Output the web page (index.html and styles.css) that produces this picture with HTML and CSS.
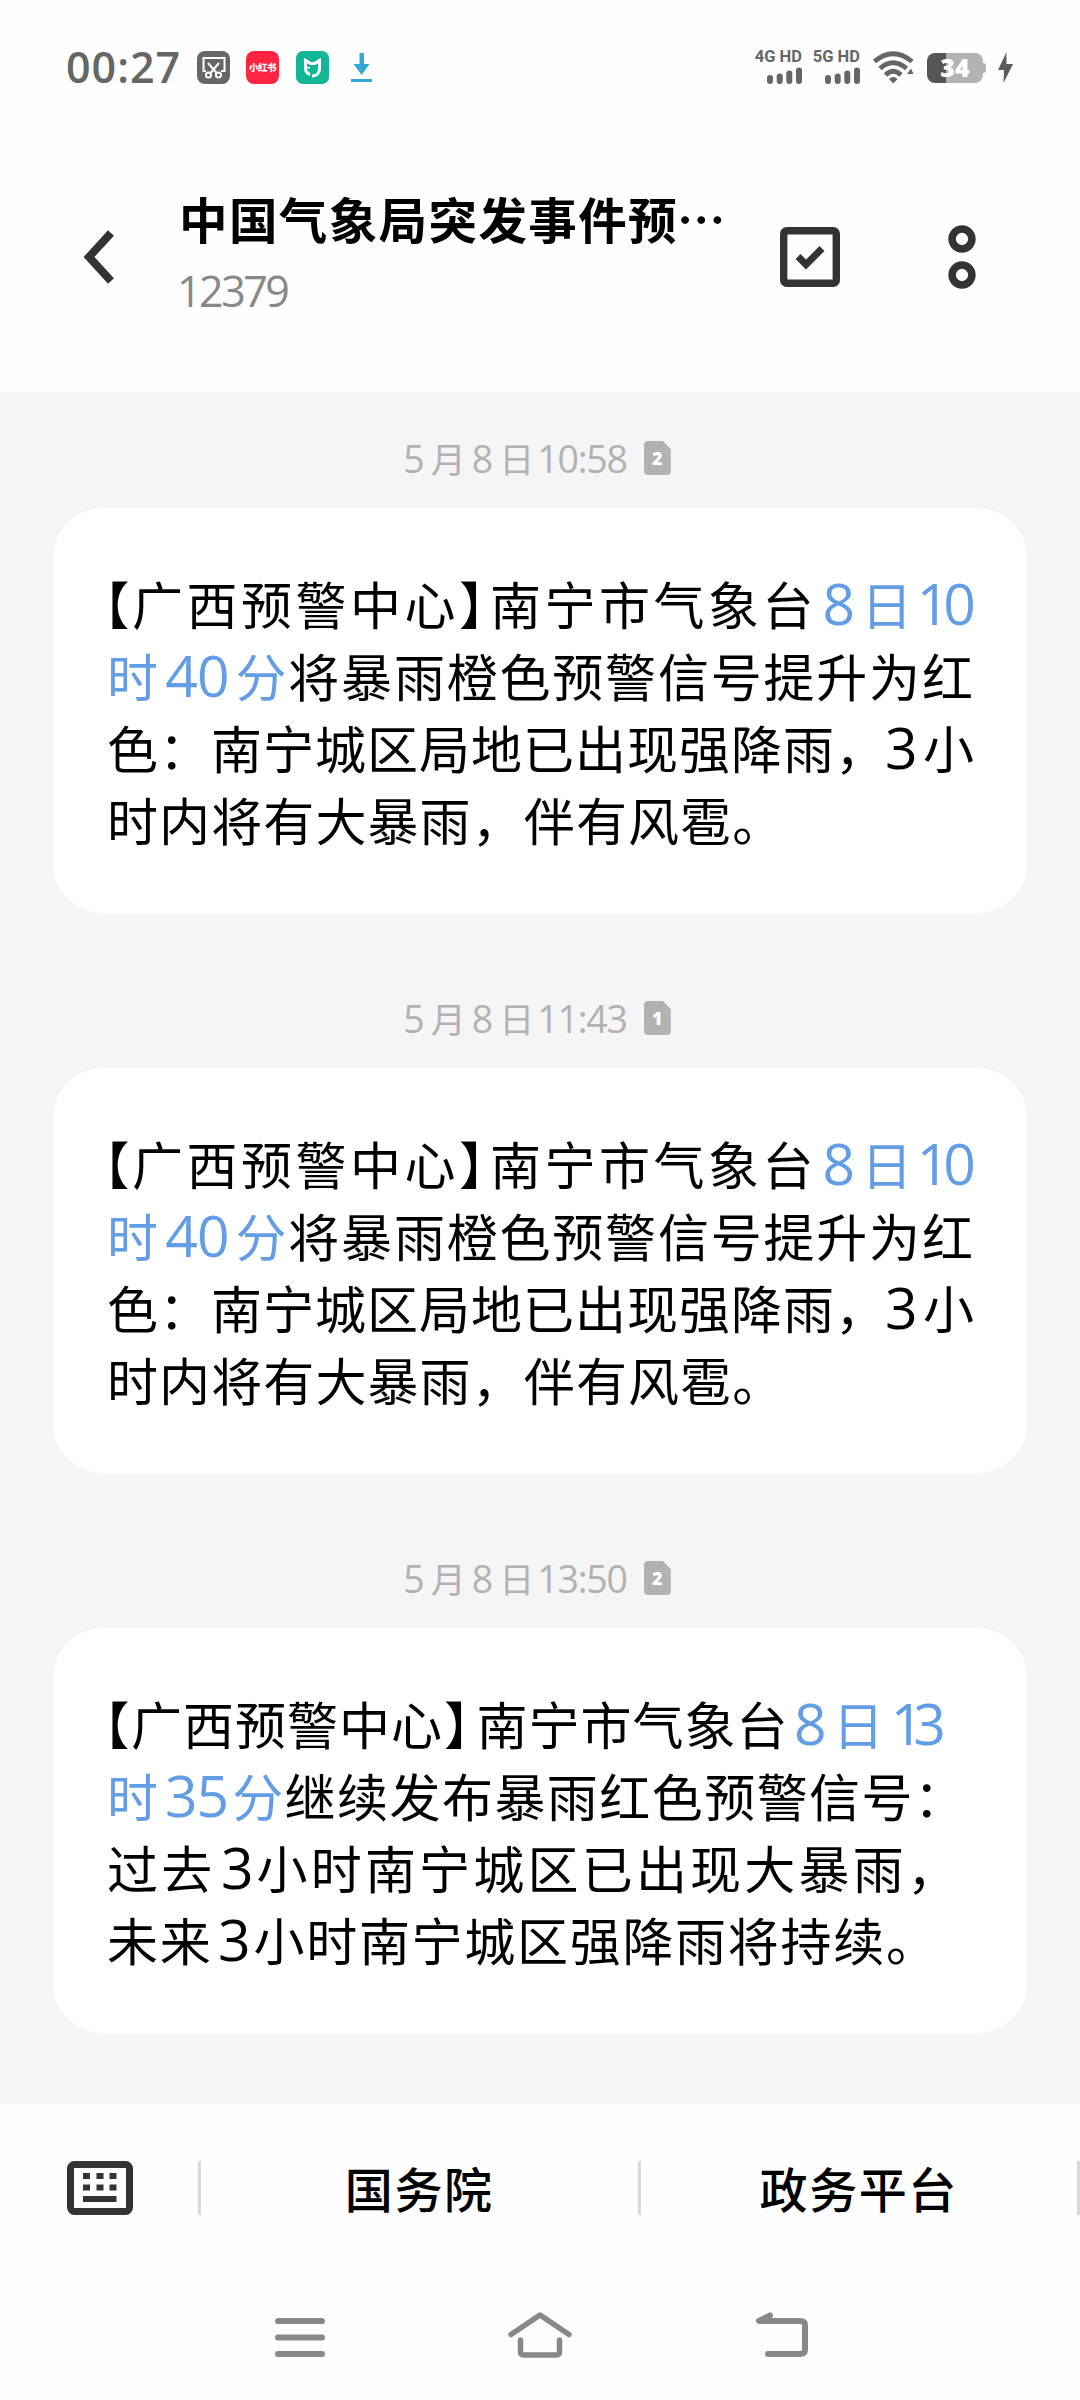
FILE: index.html
```html
<!DOCTYPE html>
<html lang="zh-CN">
<head>
<meta charset="utf-8">
<title>12379</title>
<link rel="stylesheet" href="styles.css">
</head>
<body>
<div class="status">
  <span class="clock">00:27</span>
  <div class="apps">
    <svg width="33" height="33" viewBox="0 0 33 33"><rect width="33" height="33" rx="8" fill="#666"/><g fill="none" stroke="#fff" stroke-width="2"><path d="M9 20H6.500V7H27.500V20H24"/><path d="M11 12l9 10.500M22 12l-9 10.500"/><circle cx="11.500" cy="24" r="2.600"/><circle cx="21.500" cy="24" r="2.600"/></g></svg>
    <span class="app-red">小红书</span>
    <svg width="33" height="33" viewBox="0 0 33 33"><rect width="33" height="33" rx="7" fill="#13b795"/><path d="M14 23.500c-3-1-4.500-3-4.500-6V9.500l5 3h4l5-3V18c0 4-3 7-7.500 7M12.500 16v1.500" fill="none" stroke="#fff" stroke-width="3"/></svg>
    <svg width="33" height="33" viewBox="0 0 33 33"><path d="M14.500 2h4.500v11h5.500L16.700 24 8.500 13h6zM6 28h21v3H6z" fill="#32a9d9"/></svg>
  </div>
  <div class="signals">
    <div class="sim"><span>4G HD</span><svg width="35" height="17" viewBox="0 0 35 17"><path d="M3 11v3M12.700 9.500V14M22.300 6.500V14M32 3.500V14" stroke="#666" stroke-width="6" stroke-linecap="round"/></svg></div>
    <div class="sim second"><span>5G HD</span><svg width="35" height="17" viewBox="0 0 35 17"><path d="M3 11v3M12.700 9.500V14M22.300 6.500V14M32 3.500V14" stroke="#666" stroke-width="6" stroke-linecap="round"/></svg></div>
    <svg class="wifi" width="42" height="34" viewBox="0 0 42 34"><g fill="none" stroke="#666" stroke-width="4.800"><path d="M1.500 10.500Q20 -5 39 10.500"/><path d="M7 17.500Q20 6 33.500 17.500"/><path d="M12.500 24Q20 16.500 28 24"/></g><path d="M16 28q4.300-4 8.600 0l-4.300 4.500zM34 23l4-5.500 2.500 5.500z" fill="#666"/></svg>
    <div class="battery">34</div>
    <svg class="bolt" width="17" height="31" viewBox="0 0 17 31"><path d="M9.500 0 1 18h6L6.500 31 16 12H9.500z" fill="#5c5c5c"/></svg>
  </div>
</div>

<header class="header">
  <svg class="back" width="34" height="54" viewBox="0 0 34 54"><path d="M29 3 7 27l22 24" fill="none" stroke="#333" stroke-width="8"/></svg>
  <div class="titles">
    <h1>中国气象局突发事件预<span class="dots">…</span></h1>
    <div class="number">12379</div>
  </div>
  <svg class="select" width="60" height="60" viewBox="0 0 60 60"><rect x="3.700" y="3.700" width="52.600" height="52.600" rx="3" fill="none" stroke="#333" stroke-width="7.400"/><path d="m18 29.500 8 8 16-16" fill="none" stroke="#333" stroke-width="7"/></svg>
  <svg class="more" width="28" height="64" viewBox="0 0 28 64"><g fill="none" stroke="#333" stroke-width="7.500"><circle cx="14" cy="14" r="9.900"/><circle cx="14" cy="50" r="9.900"/></g></svg>
</header>

<main class="thread">
  <div class="stamp"><span><b>5</b>月<b class="mid">8</b>日<b class="hour">10:58</b></span><span class="card-tag">2</span></div>
  <article class="bubble">
    <p class="s35"><span class="br open">【</span>广西预警中心<span class="br close">】</span>南宁市气象台<a><b>8</b>日<b class="one">10</b></a></p>
    <p class="s18"><a>时<b>40</b>分</a>将暴雨橙色预警信号提升为红</p>
    <p class="s10">色：南宁城区局地已出现强降雨，<b class="after-comma">3</b>小</p>
    <p class="s11">时内将有大暴雨，伴有风雹。</p>
  </article>

  <div class="stamp"><span><b>5</b>月<b class="mid">8</b>日<b class="hour">11:43</b></span><span class="card-tag">1</span></div>
  <article class="bubble">
    <p class="s35"><span class="br open">【</span>广西预警中心<span class="br close">】</span>南宁市气象台<a><b>8</b>日<b class="one">10</b></a></p>
    <p class="s18"><a>时<b>40</b>分</a>将暴雨橙色预警信号提升为红</p>
    <p class="s10">色：南宁城区局地已出现强降雨，<b class="after-comma">3</b>小</p>
    <p class="s11">时内将有大暴雨，伴有风雹。</p>
  </article>

  <div class="stamp"><span><b>5</b>月<b class="mid">8</b>日<b class="hour">13:50</b></span><span class="card-tag">2</span></div>
  <article class="bubble">
    <p class="s10 loose"><span class="br open">【</span>广西预警中心<span class="br close">】</span>南宁市气象台<a><b>8</b>日<b class="one">13</b></a></p>
    <p class="s15"><a>时<b class="snug">35</b>分</a>继续发布暴雨红色预警信号：</p>
    <p class="s32">过去<b class="snug">3</b>小时南宁城区已出现大暴雨，</p>
    <p class="s17">未来<b class="snug">3</b>小时南宁城区强降雨将持续。</p>
  </article>
</main>

<footer class="menu">
  <div class="keys"><svg width="66" height="54" viewBox="0 0 66 54"><rect x="3.500" y="3.500" width="59" height="47" rx="4" fill="none" stroke="#333" stroke-width="7"/><path d="M16 12h7v6h-7zM29.500 12h7v6h-7zM42.500 12h7v6h-7zM16 23.500h7v6h-7zM29.500 23.500h7v6h-7zM42.500 23.500h7v6h-7zM16 35h33.500v6H16z" fill="#333"/></svg></div>
  <div class="item">国务院</div>
  <div class="item">政务平台</div>
</footer>

<nav class="nav">
  <svg width="50" height="50" viewBox="0 0 50 50"><path d="M3 9h44M3 25.500h44M3 42h44" stroke="#888" stroke-width="6" stroke-linecap="round"/></svg>
  <svg width="66" height="50" viewBox="0 0 66 50"><g fill="none" stroke="#888" stroke-width="5.500" stroke-linecap="round" stroke-linejoin="round"><path d="M4 22.500 33 3l29 19.500"/><path d="M13.500 28v12q0 3 4 3h31q4 0 4-3V28"/></g></svg>
  <svg width="56" height="50" viewBox="0 0 56 50"><path d="M15 3.500 4 9h41q5 0 5 4v25q0 4-5 4H13" fill="none" stroke="#888" stroke-width="6" stroke-linecap="round" stroke-linejoin="round"/></svg>
</nav>
</body>
</html>
```
FILE: styles.css
```css
* { box-sizing: border-box; }
body {
  margin: 0;
  width: 1080px;
  height: 2400px;
  overflow: hidden;
  background: #fefefe;
  color: #000;
  font-family: "Noto Sans CJK SC", sans-serif;
  display: flex;
  flex-direction: column;
}
svg { display: block; flex: none; }

/* status bar */
.status {
  height: 135px;
  padding: 0 66px;
  display: flex;
  align-items: center;
  color: #666;
  font-family: "Open Sans", sans-serif;
}
.clock { width: 132px; font-size: 43px; font-weight: 600; line-height: 60px; letter-spacing: 1px; margin-top: -2px; }
.apps { display: flex; gap: 16.500px; }
.app-red {
  width: 33px;
  height: 33px;
  border-radius: 8px;
  background: #fe2442;
  color: #fff;
  font: 900 9.500px/32px "Noto Sans CJK SC", sans-serif;
  letter-spacing: -0.500px;
  text-align: center;
}
.signals { display: flex; align-items: center; margin-left: 376px; }
.sim { width: 48px; height: 33px; display: flex; flex-direction: column; align-items: flex-end; }
.sim span { font: 700 16.500px/12px Roboto, sans-serif; height: 16px; white-space: nowrap; }
.second { margin-left: 10px; }
.wifi { margin-left: 13px; }
.battery {
  width: 56px;
  height: 30px;
  margin-left: 12px;
  border-radius: 8px;
  background: linear-gradient(90deg, #555 19px, #b3b3b3 19px);
  color: #fff;
  font: 800 25px/29px "Open Sans", sans-serif;
  text-align: center;
  position: relative;
}
.battery::after {
  content: "";
  position: absolute;
  left: 56px;
  top: 10px;
  width: 3px;
  height: 10px;
  border-radius: 0 3px 3px 0;
  background: #b3b3b3;
}
.bolt { margin-left: 14px; }

/* conversation header */
.header { height: 257px; padding: 47px 0 0 82px; display: flex; align-items: flex-start; }
.back { margin-top: 48px; }
.titles { width: 599px; padding-left: 63px; }
h1 { margin: 0; font-size: 48.500px; line-height: 72px; font-weight: 700; letter-spacing: 1.400px; white-space: nowrap; }
.dots { margin-left: -1px; }
.number { margin: 7px 0 0 -2px; font: 400 43px/60px "Open Sans", sans-serif; color: #888; letter-spacing: -2.500px; }
.select { margin: 45px 0 0 65px; }
.more { margin: 43px 0 0 108px; }

/* messages */
.thread { height: 1712px; background: #f5f5f5; padding: 0 53px; }
.stamp {
  height: 116px;
  padding: 16px 6px 0 0;
  display: flex;
  align-items: center;
  justify-content: center;
  gap: 17px;
  color: #b2b2b2;
  font-size: 35px;
  line-height: 50px;
  white-space: nowrap;
}
.bubble + .stamp { height: 155px; padding-top: 55px; }
.stamp b { font: 400 37.500px/0 "Open Sans", sans-serif; }
.stamp b:first-child { margin-right: 6px; }
.stamp .mid { margin: 0 6px; }
.stamp .hour { margin-left: 3px; letter-spacing: -1.200px; }
.card-tag {
  width: 27px;
  height: 34px;
  border-radius: 4px;
  background: #b2b2b2;
  clip-path: polygon(0 0, 19px 0, 27px 8px, 27px 100%, 0 100%);
  color: #fff;
  font: 800 18px/35px "Open Sans", sans-serif;
  text-align: center;
}
.bubble {
  height: 405px;
  padding: 59px 0 0 54px;
  border-radius: 50px;
  background: #fff;
  font-size: 51px;
}
.bubble p { margin: 0; height: 72px; line-height: 72px; white-space: nowrap; }
.bubble a { color: #629de6; }
.bubble b { font: 400 57px/0 "Open Sans", sans-serif; letter-spacing: -1px; margin: 0 7px 0 5.500px; }
.bubble .one { letter-spacing: -6px; margin-left: 1px; }
.bubble .snug { margin-right: 4px; }
.bubble .after-comma { margin: 0 6.500px 0 -2px; }
.br { font-feature-settings: "halt"; }
.open { margin: 0 -1px 0 -3px; }
.close { margin-right: 2px; }
.loose .open { margin-right: 0.500px; }
.loose .close { margin: 0 6px 0 1px; }
.loose .one { letter-spacing: -10px; margin-left: 6px; }
.s10 { letter-spacing: 1px; }
.s11 { letter-spacing: 1.100px; }
.s15 { letter-spacing: 1.450px; }
.s17 { letter-spacing: 1.700px; }
.s18 { letter-spacing: 1.800px; }
.s32 { letter-spacing: 3.200px; }
.s35 { letter-spacing: 3.500px; }

/* shortcut menu */
.menu { height: 168px; display: flex; align-items: center; }
.keys { width: 198px; padding-left: 67px; }
.item {
  flex: none;
  width: 439.500px;
  height: 54px;
  border-left: 3px solid #d9d9d9;
  font-size: 48px;
  line-height: 52px;
  font-weight: 500;
  letter-spacing: 1.600px;
  text-align: center;
}
.menu::after { content: ""; width: 3px; height: 54px; background: #d9d9d9; }

/* system navigation */
.nav { height: 128px; padding: 40px 0 0 275px; display: flex; }
.nav svg + svg { margin-left: 182px; }
```
